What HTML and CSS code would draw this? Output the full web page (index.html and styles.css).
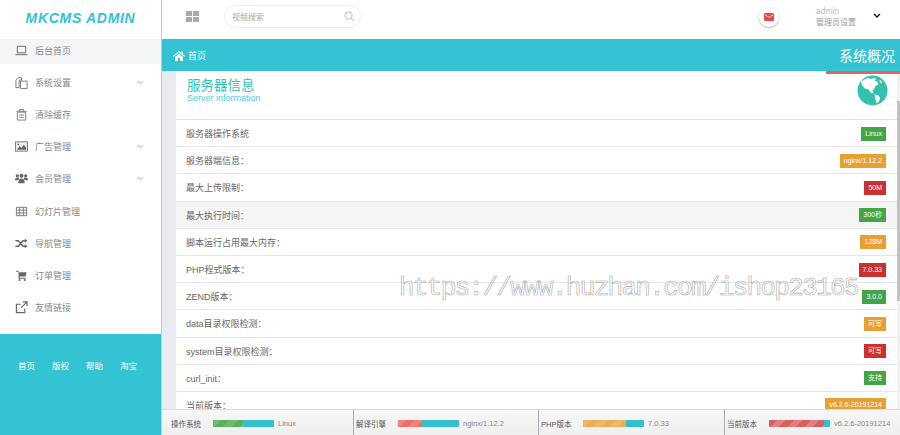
FILE: index.html
```html
<!DOCTYPE html>
<html lang="en">
<head>
    <meta charset="UTF-8">
    <title>MKCMS Admin</title>
    <link rel="stylesheet" href="styles.css">
</head>
<body>
    <div class="sidebar">
        <div class="logo">MKCMS ADMIN</div>
        <div class="menu">
            <a class="menu-item active">
                <svg class="menu-icon" viewBox="0 0 14 12"><path d="M2.500 1.500h9v7h-9zM0.500 10.500h13" fill="none" stroke="#666" stroke-width="1"/></svg>
                <span>后台首页</span>
            </a>
            <a class="menu-item">
                <svg class="menu-icon" viewBox="0 0 14 14"><path d="M1 4.500L4 1.500h3v3H4.500v8H1zM6 5.500h7v8H6z" fill="none" stroke="#777" stroke-width="1"/></svg>
                <span>系统设置</span>
                <svg class="chevron" viewBox="0 0 8 5"><path d="M1 1l3 3 3-3" fill="none" stroke="#999" stroke-width="1"/></svg>
            </a>
            <a class="menu-item">
                <svg class="menu-icon" viewBox="0 0 14 14"><path d="M2.500 4.500h9v8.500h-9zM1.500 3.500h11M5 3.500V1.500h4v2M4.500 7.500h5M4.500 10h5" fill="none" stroke="#777" stroke-width="1"/></svg>
                <span>清除缓存</span>
            </a>
            <a class="menu-item">
                <svg class="menu-icon" viewBox="0 0 14 12"><rect x="0.500" y="1" width="13" height="10" fill="#eee" stroke="#777"/><path d="M2 9.500l3-4 2 2 2.500-3.500 2.500 3v2.500z" fill="#666"/><circle cx="3.500" cy="3.700" r="1" fill="#666"/></svg>
                <span>广告管理</span>
                <svg class="chevron" viewBox="0 0 8 5"><path d="M1 1l3 3 3-3" fill="none" stroke="#999" stroke-width="1"/></svg>
            </a>
            <a class="menu-item">
                <svg class="menu-icon" viewBox="0 0 14 12"><circle cx="2.500" cy="3" r="1.700" fill="#666"/><circle cx="11.500" cy="3" r="1.700" fill="#666"/><circle cx="7" cy="3" r="2.200" fill="#666"/><path d="M0 8c0-2 1-3 2.500-3s2 .5 2 1L3.500 8zM14 8c0-2-1-3-2.500-3s-2 .5-2 1l1 2zM3.500 11c0-3.500 1.500-5 3.500-5s3.500 1.500 3.500 5z" fill="#666"/></svg>
                <span>会员管理</span>
                <svg class="chevron" viewBox="0 0 8 5"><path d="M1 1l3 3 3-3" fill="none" stroke="#999" stroke-width="1"/></svg>
            </a>
            <a class="menu-item">
                <svg class="menu-icon" viewBox="0 0 14 12"><path d="M1.500 1.500h11v9h-11zM1.500 4.500h11M1.500 7.500h11M5 1.500v9M9 1.500v9" fill="none" stroke="#777" stroke-width="1"/></svg>
                <span>幻灯片管理</span>
            </a>
            <a class="menu-item">
                <svg class="menu-icon" viewBox="0 0 14 12"><path d="M0.500 3H3.500L8.500 9H11M0.500 9H3.500L8.500 3H11" fill="none" stroke="#666" stroke-width="1.600"/><path d="M10.500 0.800L13.500 3l-3 2.200zM10.500 6.800L13.500 9l-3 2.200z" fill="#666"/></svg>
                <span>导航管理</span>
            </a>
            <a class="menu-item">
                <svg class="menu-icon" viewBox="0 0 14 12"><path d="M1.500 1h2l.5 1.500h8.500l-1 4.500H5v1.500h6.500V9.500H3.800V2.200H1.500z" fill="#666"/><circle cx="5" cy="10.800" r="1.100" fill="#666"/><circle cx="10.500" cy="10.800" r="1.100" fill="#666"/></svg>
                <span>订单管理</span>
            </a>
            <a class="menu-item">
                <svg class="menu-icon" viewBox="0 0 14 14"><path d="M10.500 8v4.500h-9v-9H6M8.500 1h4.500v4.500M13 1L6.500 7.500" fill="none" stroke="#666" stroke-width="1.200"/></svg>
                <span>友情链接</span>
            </a>
        </div>
        <div class="side-links">
            <a>首页</a>
            <a>版权</a>
            <a>帮助</a>
            <a>淘宝</a>
        </div>
    </div>

    <div class="main">
        <div class="topbar">
            <div class="grid-icon"><i></i><i></i><i></i><i></i></div>
            <div class="search">
                <span>视频搜索</span>
                <svg class="search-icon" viewBox="0 0 12 12"><circle cx="5" cy="5" r="3.800" fill="none" stroke="#ccc" stroke-width="1.200"/><path d="M8 8l3 3" stroke="#ccc" stroke-width="1.400"/></svg>
            </div>
            <div class="mail">
                <svg viewBox="0 0 10 8" width="10" height="8"><rect width="10" height="8" rx="1" fill="#e8474c"/><path d="M0.500 1.500L5 4.500l4.500-3" fill="none" stroke="#fff" stroke-width=".7"/></svg>
            </div>
            <div class="user">
                <div class="user-name">admin</div>
                <div class="user-role">管理员设置</div>
            </div>
            <svg class="user-arrow" viewBox="0 0 8 5"><path d="M1 1l3 3 3-3" fill="none" stroke="#111" stroke-width="1.300"/></svg>
        </div>

        <div class="titlebar">
            <div class="crumb">
                <svg viewBox="0 0 12 10" width="12" height="10"><path d="M6 0L0 5l.7.8L6 1.500l5.300 4.300L12 5 10 3.300V.7H8.500v1.300zM2 6v4h3V7h2v3h3V6L6 2.700z" fill="#fff"/></svg>
                <span>首页</span>
            </div>
            <div class="page-title">系统概况</div>
        </div>

        <div class="content">
            <div class="panel">
                <div class="panel-head">
                    <div>
                        <h1>服务器信息</h1>
                        <p>Server information</p>
                    </div>
                    <svg class="globe" viewBox="0 0 32 32">
                        <circle cx="16" cy="16" r="15.500" fill="#35c0ae"/>
                        <path d="M11 3l4 1 2-1 3 1-2 2 3 1 1 3-3 1-1 3-2 2 1 3-3-1-2-3-4-1-3-4-1-3 3-2z" fill="#fff"/>
                        <path d="M18 20l4 1 2 3-2 4-2 1-1-4z" fill="#fff"/>
                        <path d="M23 5l2 1 1 2-2 0z" fill="#fff"/>
                    </svg>
                </div>
                <div class="row"><span>服务器操作系统</span><span class="badge green">Linux</span></div>
                <div class="row"><span>服务器端信息：</span><span class="badge orange">nginx/1.12.2</span></div>
                <div class="row"><span>最大上传限制：</span><span class="badge red">50M</span></div>
                <div class="row hover"><span>最大执行时间：</span><span class="badge green">300秒</span></div>
                <div class="row"><span>脚本运行占用最大内存：</span><span class="badge orange">128M</span></div>
                <div class="row"><span>PHP程式版本：</span><span class="badge red">7.0.33</span></div>
                <div class="row"><span>ZEND版本：</span><span class="badge green">3.0.0</span></div>
                <div class="row"><span>data目录权限检测：</span><span class="badge orange">可写</span></div>
                <div class="row"><span>system目录权限检测：</span><span class="badge red">可写</span></div>
                <div class="row"><span>curl_init：</span><span class="badge green">支持</span></div>
                <div class="row"><span>当前版本：</span><span class="badge orange">v6.2.6-20191214</span></div>
            </div>
            <div class="scrollbar"><div class="thumb"></div></div>
        </div>

        <div class="footer">
            <div class="foot-cell">
                <span class="foot-label">操作系统</span>
                <div class="bar"><div class="fill f-green" style="width: 49%"></div></div>
                <span class="foot-value">Linux</span>
            </div>
            <div class="foot-cell">
                <span class="foot-label">解译引擎</span>
                <div class="bar"><div class="fill f-red" style="width: 40%"></div></div>
                <span class="foot-value">nginx/1.12.2</span>
            </div>
            <div class="foot-cell">
                <span class="foot-label">PHP版本</span>
                <div class="bar"><div class="fill f-orange" style="width: 70%"></div></div>
                <span class="foot-value">7.0.33</span>
            </div>
            <div class="foot-cell">
                <span class="foot-label">当前版本</span>
                <div class="bar"><div class="fill f-dark" style="width: 90%"></div></div>
                <span class="foot-value">v6.2.6-20191214</span>
            </div>
        </div>
    </div>

    <div class="watermark">https://www.huzhan.com/ishop23165</div>
</body>
</html>
```

FILE: styles.css
```css
body {
    font-family: "Liberation Sans", "Noto Sans CJK SC", sans-serif;
    background-color: #fff;
    color: #666;
    margin: 0;
    padding: 0;
    display: flex;
    width: 900px;
    height: 435px;
    overflow: hidden;
}
.sidebar {
    width: 161px;
    flex: none;
    display: flex;
    flex-direction: column;
    border-right: 1px solid #c9c9c9;
}
.logo {
    height: 39px;
    line-height: 37px;
    text-align: center;
    color: #33c3d2;
    font-size: 14px;
    font-weight: bold;
    font-style: italic;
    letter-spacing: 0.7px;
}
.menu {
    flex: 1;
}
.menu-item {
    display: flex;
    align-items: center;
    height: 32.25px;
    padding: 0 17px 0 15px;
    font-size: 9px;
    color: #888;
}
.menu-item.active {
    height: 25px;
    margin-bottom: 2px;
    padding-bottom: 3px;
    box-sizing: border-box;
    background-color: #f3f5f7;
}
.menu-icon {
    width: 13px;
    height: 13px;
    margin-right: 7px;
    flex: none;
}
.chevron {
    width: 7px;
    height: 5px;
    margin-left: auto;
}
.side-links {
    height: 101px;
    background-color: #33c3d2;
    display: flex;
    gap: 17px;
    padding: 25px 0 0 18px;
    box-sizing: border-box;
    color: #fff;
    font-size: 8.5px;
}
.main {
    flex: 1;
    min-width: 0;
    display: flex;
    flex-direction: column;
}
.topbar {
    height: 39px;
    flex: none;
    display: flex;
    align-items: center;
    padding: 0 19px 6px 24px;
    box-sizing: border-box;
}
.grid-icon {
    display: grid;
    grid-template-columns: 6px 6px;
    grid-template-rows: 5px 5px;
    gap: 1px;
    margin-right: 25px;
}
.grid-icon i {
    background-color: #aaa;
}
.search {
    width: 137px;
    height: 23px;
    box-sizing: border-box;
    border: 1px solid #eee;
    border-radius: 12px;
    display: flex;
    align-items: center;
    justify-content: space-between;
    padding: 0 5px 0 7px;
    font-size: 8px;
    color: #aaa;
}
.search-icon {
    width: 11px;
    height: 11px;
}
.mail {
    width: 20px;
    height: 20px;
    margin-left: auto;
    border-radius: 50%;
    background-color: #fff;
    box-shadow: 0 1px 2px rgba(0, 0, 0, 0.3);
    display: flex;
    align-items: center;
    justify-content: center;
}
.user {
    margin-left: 37px;
    width: 57px;
    font-size: 8px;
    line-height: 11px;
    color: #999;
}
.user-name {
    color: #bbb;
    font-size: 8.5px;
}
.user-arrow {
    width: 8px;
    height: 5px;
    margin-bottom: 2px;
}
.titlebar {
    height: 32px;
    flex: none;
    position: relative;
    background-color: #33c3d2;
    color: #fff;
    display: flex;
    align-items: center;
    justify-content: space-between;
    padding: 0 5px 0 11px;
}
.titlebar::after {
    content: "";
    position: absolute;
    right: 0;
    bottom: -3px;
    width: 74px;
    height: 3px;
    background-color: #e0685e;
}
.crumb {
    display: flex;
    align-items: center;
    gap: 3px;
    font-size: 9px;
    padding-top: 1px;
}
.page-title {
    font-size: 14px;
}
.content {
    flex: 1;
    min-height: 0;
    display: flex;
    background-color: #e9ebf1;
    padding-left: 14px;
    overflow: hidden;
}
.panel {
    flex: 1;
    background-color: #fff;
}
.panel-head {
    height: 49px;
    box-sizing: border-box;
    border-bottom: 1px solid #e3e3e3;
    display: flex;
    justify-content: space-between;
    padding: 8px 9px 0 11px;
}
.panel-head h1 {
    margin: 0;
    font-size: 13.5px;
    font-weight: normal;
    line-height: 14px;
    color: #33c3b4;
}
.panel-head p {
    margin: 0;
    font-size: 9px;
    line-height: 10px;
    color: #4fcbd8;
}
.globe {
    width: 31px;
    height: 31px;
    margin-top: -4px;
}
.row {
    height: 27.2px;
    box-sizing: border-box;
    border-bottom: 1px solid #e6e6e6;
    display: flex;
    align-items: center;
    justify-content: space-between;
    padding: 1px 11px 0 10px;
    font-size: 9px;
    color: #666;
}
.row.hover {
    background-color: #f5f5f5;
}
.badge {
    height: 14px;
    line-height: 14px;
    padding: 0 4px;
    font-size: 7px;
    color: #fff;
}
.green {
    background-color: #43a548;
}
.orange {
    background-color: #e9a033;
}
.red {
    background-color: #c9322f;
}
.scrollbar {
    width: 3px;
    flex: none;
    background-color: #f1f1f1;
}
.thumb {
    margin-top: 30px;
    height: 200px;
    background-color: #c1c1c1;
}
.footer {
    height: 26px;
    flex: none;
    display: grid;
    grid-template-columns: 191px 185px 186px 176px;
    background: linear-gradient(#f7f7f7, #efefef);
    border-top: 1px solid #ddd;
    box-sizing: border-box;
}
.foot-cell {
    display: flex;
    align-items: center;
    padding: 1px 0 0 2px;
    border-left: 1px solid #aaa;
    font-size: 7.5px;
}
.foot-cell:first-child {
    padding-left: 9px;
    border-left: none;
}
.foot-label {
    width: 42px;
    flex: none;
    color: #555;
}
.bar {
    width: 61px;
    height: 7px;
    flex: none;
    margin-right: 4px;
    border-radius: 1px;
    overflow: hidden;
    background-color: #33bfd0;
}
.fill {
    height: 100%;
}
.f-green {
    background: repeating-linear-gradient(135deg, #6dbb6d 0 6px, #5fae60 6px 12px);
}
.f-red {
    background: repeating-linear-gradient(135deg, #f4807a 0 6px, #ee6f6a 6px 12px);
}
.f-orange {
    background: repeating-linear-gradient(135deg, #f2b565 0 6px, #eeac55 6px 12px);
}
.f-dark {
    background: repeating-linear-gradient(135deg, #d9605f 0 6px, #e08080 6px 12px);
}
.foot-value {
    color: #888;
    white-space: nowrap;
}
.watermark {
    position: absolute;
    left: 399px;
    top: 273px;
    font-family: "Liberation Mono", monospace;
    font-size: 26px;
    letter-spacing: -1.7px;
    color: rgba(255, 255, 255, 0.5);
    -webkit-text-stroke: 0.6px #aaa;
    white-space: nowrap;
}
```
